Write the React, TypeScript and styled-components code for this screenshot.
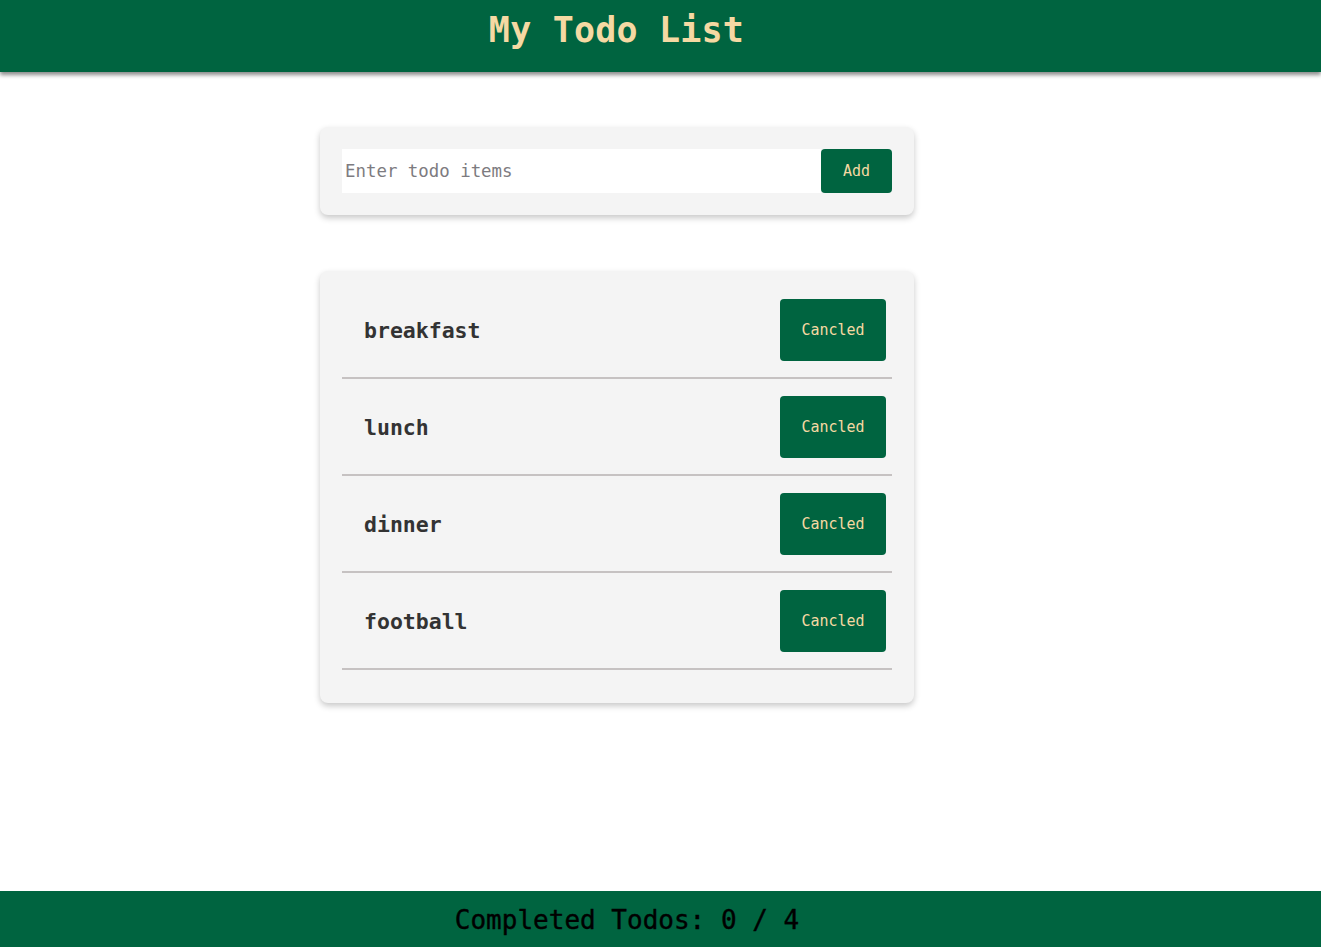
import React from "react";
import styled, { createGlobalStyle } from "styled-components";

const GREEN = "#006440";
const CREAM = "#f5d9a3";
const FONT = `"DejaVu Sans Mono", "Liberation Mono", monospace`;

const Global = createGlobalStyle`
  html, body { margin: 0; padding: 0; background: #ffffff; }
  body { font-family: ${FONT}; }
  * { box-sizing: border-box; }
`;

const Page = styled.div`
  min-height: 100vh;
  display: flex;
  flex-direction: column;
`;

const Header = styled.header`
  height: 72px;
  background: ${GREEN};
  box-shadow: 0 3px 4px rgba(0, 0, 0, 0.45);
  display: flex;
  align-items: center;
  justify-content: center;
  padding: 0 88px 12px 0;
`;

const Title = styled.h1`
  margin: 0;
  font-family: ${FONT};
  font-size: 35px;
  font-weight: 700;
  color: ${CREAM};
  letter-spacing: 0.2px;
`;

const Main = styled.main`
  width: 594px;
  margin-left: calc(50% - 340.5px);
  padding-top: 55px;
  display: flex;
  flex-direction: column;
  gap: 56px;
`;

const Card = styled.section`
  background: #f4f4f4;
  border-radius: 8px;
  box-shadow: 0 3px 6px rgba(0, 0, 0, 0.22);
  padding: 22px;
`;

const Form = styled.form`
  display: flex;
  height: 44px;
`;

const Input = styled.input`
  flex: 1;
  border: none;
  outline: none;
  background: #ffffff;
  font-family: ${FONT};
  font-size: 17.4px;
  padding: 0 3px;
  color: #333;
  &::placeholder { color: #7d7b80; }
`;

const Button = styled.button<{ $w: number; $h: number }>`
  width: ${(p) => p.$w}px;
  height: ${(p) => p.$h}px;
  border: none;
  border-radius: 4px;
  background: ${GREEN};
  color: ${CREAM};
  font-family: ${FONT};
  font-size: 15px;
  cursor: pointer;
  flex-shrink: 0;
`;

const List = styled.ul`
  list-style: none;
  margin: 0;
  padding: 0;
`;

const Row = styled.li`
  display: flex;
  align-items: center;
  justify-content: space-between;
  padding: 6px 6px 16px 22px;
  margin-bottom: 11px;
  border-bottom: 2px solid #c6c2c2;
`;

const ItemText = styled.span`
  font-family: ${FONT};
  font-size: 21.5px;
  font-weight: 700;
  color: #333333;
`;

const Footer = styled.footer`
  margin-top: auto;
  height: 56px;
  background: ${GREEN};
  display: flex;
  align-items: center;
  justify-content: center;
  padding: 2px 67px 0 0;
`;

const FooterText = styled.p`
  margin: 0;
  font-family: ${FONT};
  font-size: 26px;
  color: #000;
  -webkit-text-stroke: 0.4px #000;
`;

const todos = ["breakfast", "lunch", "dinner", "football"];

export default function App() {
  return (
    <Page>
      <Global />
      <Header>
        <Title>My Todo List</Title>
      </Header>
      <Main>
        <Card>
          <Form onSubmit={(e) => e.preventDefault()}>
            <Input placeholder="Enter todo items" />
            <Button $w={71} $h={44} type="submit">Add</Button>
          </Form>
        </Card>
        <Card>
          <List>
            {todos.map((t) => (
              <Row key={t}>
                <ItemText>{t}</ItemText>
                <Button $w={106} $h={62} type="button">Cancled</Button>
              </Row>
            ))}
          </List>
        </Card>
      </Main>
      <Footer>
        <FooterText>Completed Todos: 0 / 4</FooterText>
      </Footer>
    </Page>
  );
}
